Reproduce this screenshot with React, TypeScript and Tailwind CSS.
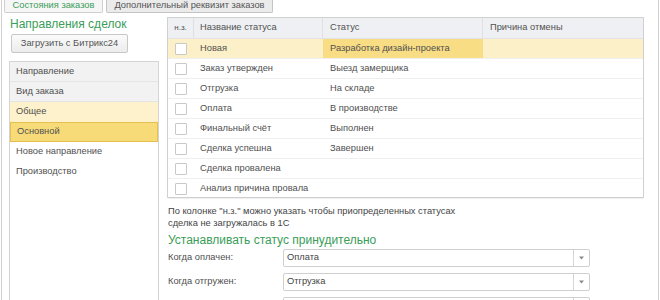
import React from "react";

const rows = [
  { name: "Новая", status: "Разработка дизайн-проекта", sel: true },
  { name: "Заказ утвержден", status: "Выезд замерщика" },
  { name: "Отгрузка", status: "На складе" },
  { name: "Оплата", status: "В производстве" },
  { name: "Финальный счёт", status: "Выполнен" },
  { name: "Сделка успешна", status: "Завершен" },
  { name: "Сделка провалена", status: "" },
  { name: "Анализ причина провала", status: "" },
];

const list = [
  { t: "Направление", k: "h" },
  { t: "Вид заказа", k: "h" },
  { t: "Общее", k: "l" },
  { t: "Основной", k: "s" },
  { t: "Новое направление", k: "" },
  { t: "Производство", k: "" },
];

function Select({ value }: { value: string }) {
  return (
    <div className="flex h-[18px] w-[307px] border border-[#cfcfcf] rounded-[2px] bg-white">
      <div className="flex-1 pl-[3px] flex items-center text-[#444]">{value}</div>
      <div className="w-[16px] border-l border-[#d6d6d6] flex items-center justify-center">
        <svg width="5" height="4" viewBox="0 0 5 4"><path d="M0 0.5 L5 0.5 L2.5 3.5 Z" fill="#888" /></svg>
      </div>
    </div>
  );
}

export default function App() {
  return (
    <div className="w-[660px] h-[300px] overflow-hidden bg-white font-['Liberation_Sans',Arial,sans-serif] text-[9.3px] text-[#505050] px-[1px]">
      <div className="h-full border-l border-r border-[#d2d2d2] flex flex-col">
        {/* tabs */}
        <div className="flex h-[13px] items-stretch">
          <div className="ml-[2px] w-[99px] border border-t-0 border-[#cfcfcf] bg-[#f6f6f6] text-[#3a9d58] flex items-center justify-center rounded-b-[2px]">
            Состояния заказов
          </div>
          <div className="ml-[3px] w-[167px] border border-t-0 border-[#c4c4c4] bg-[#ebebeb] text-[#555] flex items-center justify-center rounded-b-[2px]">
            Дополнительный реквизит заказов
          </div>
        </div>
        <div className="flex flex-1 min-h-0">
          {/* left */}
          <div className="ml-[7px] w-[150px] flex flex-col">
            <div className="mt-[4px] h-[15px] text-[12px] leading-[15px] text-[#3a9d58] pl-[1px]">Направления сделок</div>
            <div className="mt-[2px] ml-[2px] w-[117px] h-[19px] border border-[#c8c8c8] rounded-[2px] bg-gradient-to-b from-[#fbfbfb] to-[#ececec] flex items-center justify-center text-[#555]">
              Загрузить с Битрикс24
            </div>
            <div className="mt-[8px] flex-1 border border-[#d4d4d4] border-b-0 flex flex-col">
              {list.map((r, i) => (
                <div
                  key={i}
                  className={
                    "h-[20px] flex items-center pl-[6px] " +
                    (r.k === "h"
                      ? "bg-[#f2f2f2] border-b border-[#e4e4e4]"
                      : r.k === "l"
                      ? "bg-[#fdf2cc]"
                      : r.k === "s"
                      ? "bg-[#f8db79] border border-[#e6c04f]"
                      : "")
                  }
                >
                  {r.t}
                </div>
              ))}
            </div>
          </div>
          {/* right */}
          <div className="ml-[8px] flex flex-col">
            <div className="mt-[4px] w-[477px] h-[181px] border border-[#d0d0d0] flex flex-col">
              <div className="h-[21px] flex bg-[#eff0f3] border-b border-[#e2e2e2] shrink-0">
                <div className="w-[26px] flex items-center justify-center border-r border-[#e0e0e0] text-[8px]">н.з.</div>
                <div className="w-[129px] flex items-center pl-[6px] border-r border-[#e0e0e0]">Название статуса</div>
                <div className="w-[160px] flex items-center pl-[7px] border-r border-[#e0e0e0]">Статус</div>
                <div className="flex-1 flex items-center pl-[7px]">Причина отмены</div>
              </div>
              {rows.map((r, i) => (
                <div key={i} className={"h-[20px] flex border-b border-[#efefef] shrink-0 " + (r.sel ? "bg-[#fcf0c8]" : "")}>
                  <div className="w-[26px] flex items-center justify-center">
                    <div className="w-[12px] h-[12px] border border-[#c9c9c9] bg-white rounded-[1px]" />
                  </div>
                  <div className="w-[129px] flex items-center pl-[6px]">{r.name}</div>
                  <div className={"w-[160px] flex items-center pl-[7px] " + (r.sel ? "bg-[#f9dd84]" : "")}>{r.status}</div>
                  <div className="flex-1" />
                </div>
              ))}
            </div>
            <div className="mt-[7px] leading-[12px] pl-[1px] text-[#454545]">
              По колонке "н.з." можно указать чтобы приопределенных статусах
              <br />
              сделка не загружалась в 1С
            </div>
            <div className="mt-[3px] h-[16px] leading-[16px] text-[12px] text-[#3a9d58] pl-[1px]">Устанавливать статус принудительно</div>
            <div className="mt-[1px] flex items-center h-[18px]">
              <div className="w-[116px] pl-[1px]">Когда оплачен:</div>
              <Select value="Оплата" />
            </div>
            <div className="mt-[6px] flex items-center h-[18px]">
              <div className="w-[116px] pl-[1px]">Когда отгружен:</div>
              <Select value="Отгрузка" />
            </div>
            <div className="mt-[6px] flex items-center h-[18px]">
              <div className="w-[116px] pl-[1px]"></div>
              <Select value="" />
            </div>
          </div>
        </div>
      </div>
    </div>
  );
}
